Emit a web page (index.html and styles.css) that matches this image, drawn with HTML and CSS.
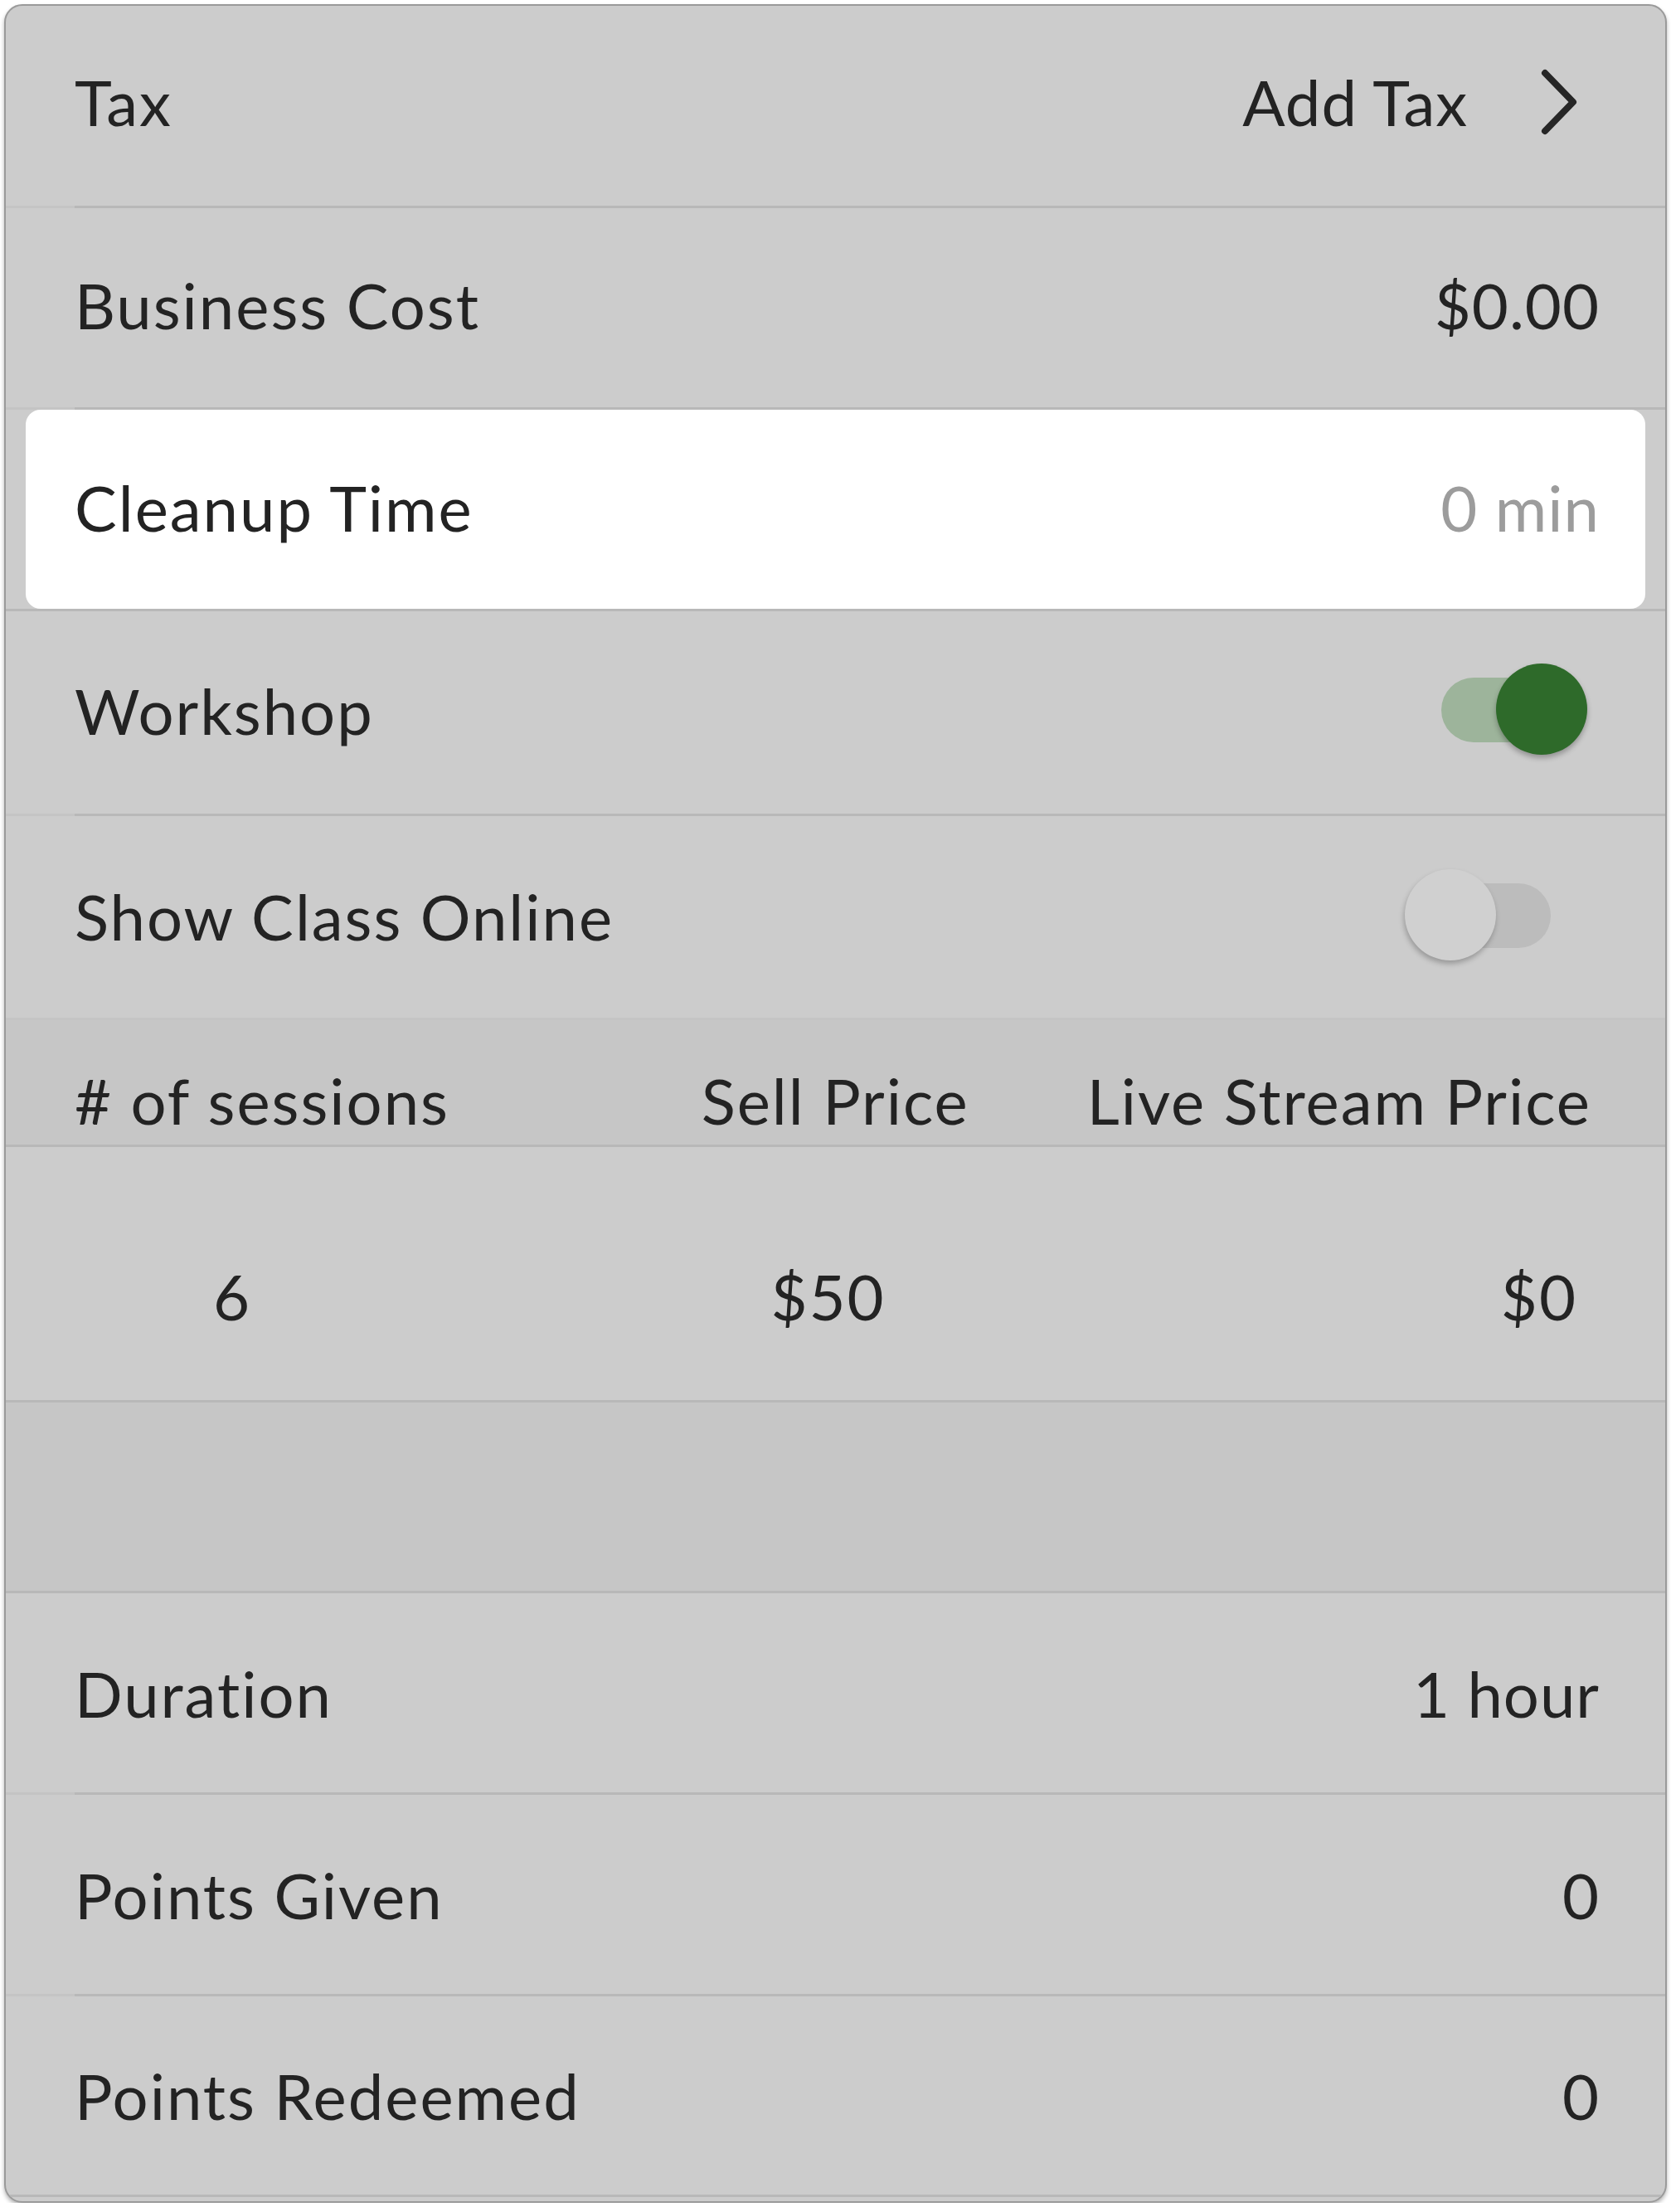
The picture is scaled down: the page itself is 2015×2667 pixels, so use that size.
FILE: index.html
```html
<!DOCTYPE html>
<html lang="en">

<head>
    <meta charset="UTF-8">
    <meta name="viewport" content="width=device-width, initial-scale=1.0">
    <link rel="stylesheet" href="styles.css">
    <title>Class Settings</title>
</head>

<body>
    <div class="card">
        <!-- Tax -->
        <div class="row inset">
            <div class="row-body h-244 lift-10">
                <span class="label">Tax</span>
                <span class="value">Add Tax</span>
                <svg class="chevron" width="44" height="80" viewBox="0 0 44 80">
                    <polyline points="5,5 39,40 5,75" fill="none" stroke="#262626" stroke-width="8" stroke-linecap="round" stroke-linejoin="round" />
                </svg>
            </div>
        </div>

        <!-- Business cost -->
        <div class="row inset">
            <div class="row-body h-243 lift-7">
                <span class="label">Business Cost</span>
                <span class="value">$0.00</span>
            </div>
        </div>

        <!-- Cleanup time (highlighted) -->
        <div class="row inset">
            <div class="row-body h-243 highlight-wrap">
                <div class="highlight">
                    <span class="label">Cleanup Time</span>
                    <span class="value muted">0 min</span>
                </div>
            </div>
        </div>

        <!-- Workshop -->
        <div class="row inset">
            <div class="row-body h-247 lift-6">
                <span class="label">Workshop</span>
                <div class="switch on">
                    <div class="switch-track"></div>
                    <div class="switch-knob"></div>
                </div>
            </div>
        </div>

        <!-- Show class online -->
        <div class="row">
            <div class="row-body h-246 lift-6 no-line">
                <span class="label">Show Class Online</span>
                <div class="switch off">
                    <div class="switch-track"></div>
                    <div class="switch-knob"></div>
                </div>
            </div>
        </div>

        <!-- Pricing table -->
        <div class="table-head">
            <span class="col-sessions">#&nbsp;of sessions</span>
            <span class="col-sell">Sell Price</span>
            <span class="col-live">Live Stream Price</span>
        </div>
        <div class="table-row">
            <span class="cell-sessions">6</span>
            <span class="cell-sell">$50</span>
            <span class="cell-live">$0</span>
        </div>
        <div class="table-gap"></div>

        <!-- Duration -->
        <div class="row inset">
            <div class="row-body h-243">
                <span class="label">Duration</span>
                <span class="value">1 hour</span>
            </div>
        </div>

        <!-- Points -->
        <div class="row inset">
            <div class="row-body h-243">
                <span class="label">Points Given</span>
                <span class="value">0</span>
            </div>
        </div>
        <div class="row full">
            <div class="row-body h-242">
                <span class="label">Points Redeemed</span>
                <span class="value">0</span>
            </div>
        </div>
    </div>
</body>
</html>
```

FILE: styles.css
```css
body {
    margin: 0;
    padding: 5px 0 0 5px;
    background-color: #ffffff;
    font-family: Lato, "Open Sans", sans-serif;
    color: #232323;
}

.card {
    box-sizing: border-box;
    width: 2005px;
    border: 2px solid #9a9a9a;
    border-radius: 22px;
    overflow: hidden;
    background-color: #cccccc;
    box-shadow: 0 3px 5px rgba(0, 0, 0, 0.3);
    padding-bottom: 5px;
}

/* list rows */
.row {
    background: linear-gradient(#c4c4c4, #c4c4c4) left bottom / 100% 3px no-repeat;
}

.row-body {
    box-sizing: border-box;
    display: flex;
    align-items: center;
    margin-left: 83px;
    padding-right: 79px;
    border-bottom: 3px solid #b8b8b8;
}

.row.full .row-body {
    margin-left: 0;
    padding-left: 83px;
}

.row-body.no-line {
    border-bottom: none;
}

/* heights include the 3px line */
.h-242 { height: 242px; }
.h-243 { height: 243px; }
.h-244 { height: 244px; }
.h-246 { height: 246px; }
.h-247 { height: 247px; }

.lift-6 { padding-bottom: 6px; }
.lift-7 { padding-bottom: 7px; }
.lift-10 { padding-bottom: 10px; }

.label {
    flex: 1;
    font-size: 76px;
    letter-spacing: 2px;
    white-space: nowrap;
}

.value {
    font-size: 76px;
    letter-spacing: 1px;
    white-space: nowrap;
}

.muted {
    color: #9c9c9c;
}

.chevron {
    margin-left: 88px;
    margin-right: 27px;
}

/* highlighted cleanup row */
.highlight-wrap {
    margin-left: 0;
    padding: 0 24px;
    align-items: stretch;
}

.highlight {
    flex: 1;
    display: flex;
    align-items: center;
    background-color: #ffffff;
    border-radius: 18px;
    padding: 0 55px 6px 59px;
}

/* toggles */
.switch {
    position: relative;
    width: 176px;
    height: 112px;
}

.switch-track {
    position: absolute;
    top: 17px;
    width: 160px;
    height: 78px;
    border-radius: 39px;
}

.switch-knob {
    position: absolute;
    top: 0;
    width: 110px;
    height: 110px;
    border-radius: 50%;
}

.switch.on {
    margin-right: 15px;
}

.switch.on .switch-track {
    left: 0;
    background-color: #9db49b;
}

.switch.on .switch-knob {
    left: 66px;
    background-color: #2e6a2a;
    box-shadow: 0 4px 6px rgba(0, 0, 0, 0.28);
}

.switch.off {
    margin-right: 59px;
}

.switch.off .switch-track {
    left: 16px;
    background-color: #bcbcbc;
}

.switch.off .switch-knob {
    left: 0;
    background-color: #d0d0d0;
    box-shadow: -1px 4px 6px rgba(0, 0, 0, 0.25);
}

/* pricing table */
.table-head {
    display: flex;
    align-items: flex-end;
    height: 153px;
    box-sizing: border-box;
    padding: 0 89px 8px 83px;
    background-color: #c6c6c6;
    border-bottom: 3px solid #b8b8b8;
    font-size: 76px;
    letter-spacing: 2px;
    line-height: 1.2;
}

.col-sessions {
    flex: 1;
}

.col-live {
    margin-left: 142px;
}

.table-row {
    display: grid;
    grid-template-columns: 380px 1fr 380px;
    align-items: end;
    height: 308px;
    box-sizing: border-box;
    padding: 0 79px 80px 83px;
    border-bottom: 3px solid #b8b8b8;
    font-size: 76px;
    letter-spacing: 2px;
    line-height: 1.2;
}

.cell-sessions {
    text-align: center;
}

.cell-sell {
    text-align: center;
    padding-right: 22px;
}

.cell-live {
    text-align: right;
    padding-right: 27px;
}

.table-gap {
    height: 227px;
    background-color: #c6c6c6;
    border-bottom: 3px solid #b8b8b8;
}
```
